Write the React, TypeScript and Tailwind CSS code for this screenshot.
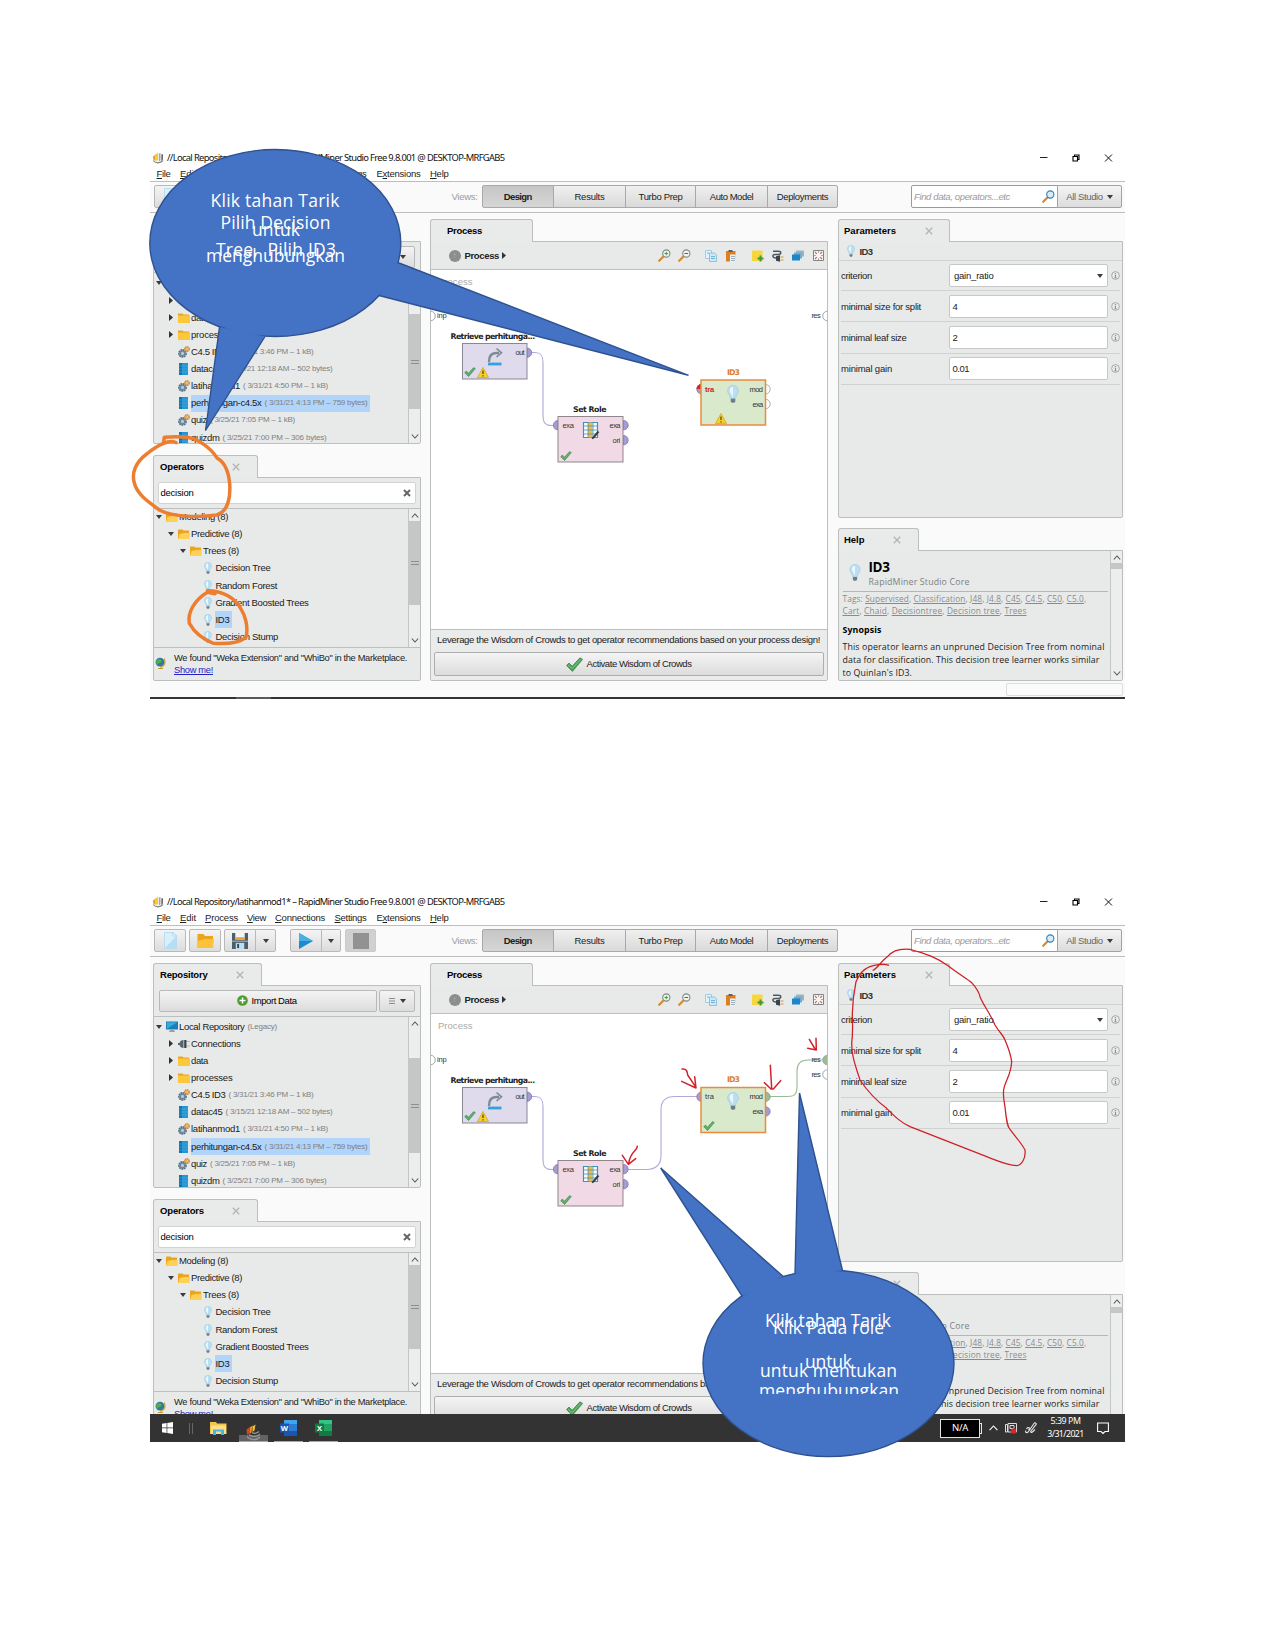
import { useLayoutEffect, useRef, useState } from "react";
import type { ReactNode } from "react";

/* Inline text whose tracking is adjusted so that it fills a given width. */
function Fit({ w, className = "", children }: { w: number; className?: string; children: ReactNode }) {
  const ref = useRef<HTMLSpanElement>(null);
  const [ls, setLs] = useState(0);
  useLayoutEffect(() => {
    const el = ref.current;
    if (!el) return;
    const n = (el.textContent || "").length || 1;
    setLs((w - el.getBoundingClientRect().width) / n);
  }, [w]);
  return (
    <span ref={ref} className={"inline-block shrink-0 whitespace-pre " + className} style={{ letterSpacing: ls }}>
      {children}
    </span>
  );
}

/* ---------- icons ---------- */

const Logo = () => (
  <svg className="h-[12px] w-[12px] shrink-0" viewBox="0 0 12 12">
    <path d="M.8 4.500 3 3v5L1.500 8.500z" fill="#e8a13a" />
    <path d="M3 2.500 6 .8v7.400L3 9z" fill="#f2cf2a" />
    <path d="M6.800 1.500 8.500 1v7.500l-1.700.8z" fill="#a4a4a4" />
    <path d="M9.300 2.500 11 2v5.500L9.300 9z" fill="#6d6d6d" />
    <path d="M1.300 8.500C3 11 8 12 11 8.500" fill="none" stroke="#8a8a8a" strokeWidth="1.300" />
  </svg>
);

const Caret = ({ className = "" }: { className?: string }) => (
  <svg className={"h-[4px] w-[6px] shrink-0 " + className} viewBox="0 0 6 4">
    <path d="M0 0h6L3 4z" fill="#3c3c3c" />
  </svg>
);
const Right = () => (
  <svg className="h-[7px] w-[4px] shrink-0" viewBox="0 0 4 7">
    <path d="M0 0v7l4-3.500z" fill="#333" />
  </svg>
);
const Close = () => (
  <svg className="h-[8px] w-[8px] shrink-0" viewBox="0 0 8 8">
    <path d="M.8.8l6.400 6.400M7.200.8.8 7.200" stroke="#b4b4b4" strokeWidth="1.300" />
  </svg>
);

const Folder = ({ open = false }: { open?: boolean }) => (
  <svg className="h-[10px] w-[12px] shrink-0" viewBox="0 0 12 10">
    <path d="M0 .5h4.500l1 1H11V10H0z" fill="#e9a51c" />
    {open ? <path d="M0 10 1.500 5 6 4l6-.2L11.500 10z" fill="#ffd057" /> : <path d="M0 2.500h12V10H0z" fill="#fbc83c" />}
  </svg>
);
const Monitor = () => (
  <svg className="h-[11px] w-[12px] shrink-0" viewBox="0 0 12 11">
    <path d="M0 .5h12v8H0z" fill="#1b7fb5" />
    <path d="M.7 1.200h10.600L1 7.800z" fill="#39a9e0" />
    <path d="M4 9.500h4l1 1H3z" fill="#555" />
  </svg>
);
const Plug = () => (
  <svg className="h-[10px] w-[12px] shrink-0" viewBox="0 0 12 10">
    <path d="M0 4h1.500C2 2 3.500 1 5.500 1v8C3.500 9 2 8 1.500 6H0z" fill="#54666f" />
    <path d="M6.200 1h2.300v8H6.200z" fill="#37454c" />
    <path d="M9 2.500h3M9 7h3" stroke="#d8b84a" strokeWidth="1.200" />
  </svg>
);
const Gears = () => (
  <svg className="h-[12px] w-[12px] shrink-0" viewBox="0 0 12 12">
    <circle cx="4.500" cy="7.400" r="3.300" fill="none" stroke="#4f6d82" strokeWidth="2.200" strokeDasharray="1.700 .5" />
    <circle cx="4.500" cy="7.400" r="2.400" fill="#b9c8d2" stroke="#6d8698" strokeWidth="1.600" />
    <circle cx="9" cy="3" r="2" fill="none" stroke="#d98a2b" strokeWidth="2" strokeDasharray="1.300 .35" />
    <circle cx="9" cy="3" r="1.400" fill="#f0d0a0" stroke="#e3a04c" />
  </svg>
);
const Table = () => (
  <svg className="h-[12px] w-[9px] shrink-0" viewBox="0 0 9 12">
    <path d="M0 0h9v12H0z" fill="#2496d3" />
    <path d="M0 0h3v12H0z" fill="#1474ab" />
    <path d="M0 3h9M0 6h9M0 9h9" stroke="#62bdea" strokeWidth=".4" />
  </svg>
);
const Bulb = ({ className = "h-[12px] w-[8px]" }: { className?: string }) => (
  <svg className={"shrink-0 " + className} viewBox="0 0 8 12">
    <path d="M4 .3A3.600 3.600 0 0 0 .4 3.900C.4 6 2.300 6.600 2.300 9h3.400c0-2.400 1.900-3 1.900-5.100A3.600 3.600 0 0 0 4 .3z" fill="#b8dff3" stroke="#98c6de" strokeWidth=".4" />
    <path d="M3 1.500C1.700 2.200 1.500 4 2.200 5.200L4 8V1z" fill="#eaf7fd" />
    <path d="M2.500 9.200h3v1.800L4.800 11.800H3.200L2.500 11z" fill="#6e7c85" />
  </svg>
);
const Check = ({ className }: { className: string }) => (
  <svg className={"shrink-0 " + className} viewBox="0 0 17 15">
    <path d="M.5 8.500 3 6l3.200 3.200L14 .8l2.600 1.600L6.400 14.400z" fill="#4da35a" stroke="#2f7f3d" strokeWidth=".7" />
    <path d="M2 8.200 6.300 11.500 15 2.200" fill="none" stroke="#7cc487" strokeWidth="1" />
  </svg>
);
const Warn = ({ className }: { className: string }) => (
  <svg className={className} viewBox="0 0 12 11">
    <path d="M6 .5 11.600 10.500H.4z" fill="#f6cf2c" stroke="#d4a514" strokeWidth=".7" strokeLinejoin="round" />
    <path d="M6 3.500v3.600M6 8.200v1.200" stroke="#4f430e" strokeWidth="1.200" />
  </svg>
);
const Search = ({ sign = "" }: { sign?: string }) => (
  <svg className="h-[13px] w-[13px] shrink-0" viewBox="0 0 13 13">
    <path d="M1.200 11.800 5.500 7.500" stroke="#d8892b" strokeWidth="2.200" strokeLinecap="round" />
    <circle cx="8.300" cy="4.500" r="3.600" fill={sign ? "#eef3ee" : "#d6ecf8"} stroke={sign ? "#7e8a86" : "#2d7fb5"} strokeWidth="1.100" />
    {sign === "+" && <path d="M6.500 4.500h3.600M8.300 2.700v3.600" stroke="#4a9c3f" />}
    {sign === "-" && <path d="M6.500 4.500h3.600" stroke="#c0392b" />}
  </svg>
);
const Info = () => (
  <svg className="h-[9px] w-[9px] shrink-0" viewBox="0 0 9 9">
    <circle cx="4.500" cy="4.500" r="3.900" fill="none" stroke="#9a9a9a" strokeWidth=".8" />
    <path d="M4.500 4v2.800M3.500 6.800h2M3.700 4h.8M4.500 2v1" stroke="#7a7a7a" strokeWidth=".8" />
  </svg>
);

/* ---------- shared chrome ---------- */

const btn = "flex items-center justify-center border border-[#b9b9b9] bg-gradient-to-b from-[#f4f4f4] to-[#dcdcdc]";

function Tab({ label, lw, className, gap, close = true }: { label: string; lw: number; className: string; gap?: string; close?: boolean }) {
  return (
    <div className={"relative z-10 -mb-px flex h-[23px] shrink-0 items-center rounded-t-[3px] border border-b-0 border-[#bdbebe] bg-[#e9eaea] pb-px " + className}>
      <Fit w={lw} className="text-[9.5px] font-bold text-black">{label}</Fit>
      {close && <span className={gap}><Close /></span>}
    </div>
  );
}

function Scrollbar({ before, thumb, grip = true }: { before: string; thumb: string; grip?: boolean }) {
  return (
    <div className="flex w-[12px] shrink-0 flex-col items-center border-l border-[#c4c5c5] bg-[#eceded]">
      <svg className="mt-[4px] h-[5px] w-[8px] shrink-0" viewBox="0 0 8 5"><path d="M.8 4.500 4 1l3.200 3.500" fill="none" stroke="#555" strokeWidth="1.100" /></svg>
      <div className={"shrink-0 " + before} />
      <div className={"flex w-full shrink-0 flex-col items-center justify-center gap-[2px] bg-[#c5c6c6] " + thumb}>
        {grip && <><i className="h-px w-[8px] bg-[#8d8e8e]" /><i className="h-px w-[8px] bg-[#8d8e8e]" /></>}
      </div>
      <div className="flex-1" />
      <svg className="mb-[4px] h-[5px] w-[8px] shrink-0" viewBox="0 0 8 5"><path d="M.8.5 4 4 7.200.5" fill="none" stroke="#555" strokeWidth="1.100" /></svg>
    </div>
  );
}

/* ---------- header ---------- */

const menus: [string, number, number, string][] = [
  ["File", 0, 14, "w-[23.5px]"],
  ["Edit", 0, 16, "w-[25px]"],
  ["Process", 0, 33, "w-[42px]"],
  ["View", 0, 19, "w-[28px]"],
  ["Connections", 0, 50, "w-[59.5px]"],
  ["Settings", 0, 32, "w-[42px]"],
  ["Extensions", 1, 44, "w-[53.5px]"],
  ["Help", 0, 18.5, "w-[20px]"],
];

const views: [string, number, string][] = [
  ["Design", 28, "w-[72.5px] bg-gradient-to-b from-[#c6c6c6] to-[#d6d6d6] font-bold rounded-l-[2px]"],
  ["Results", 30, "w-[73px] bg-gradient-to-b from-[#f0f0f0] to-[#d9d9d9]"],
  ["Turbo Prep", 44, "w-[71px] bg-gradient-to-b from-[#f0f0f0] to-[#d9d9d9]"],
  ["Auto Model", 43.5, "w-[73px] bg-gradient-to-b from-[#f0f0f0] to-[#d9d9d9]"],
  ["Deployments", 51.5, "w-[71px] bg-gradient-to-b from-[#f0f0f0] to-[#d9d9d9] rounded-r-[2px]"],
];

function Header() {
  return (
    <>
      <div className="flex h-[20px] shrink-0 items-center pl-[2px]">
        <Logo />
        <Fit w={337.5} className="ml-[3px] font-['Noto_Sans'] text-[9.4px] text-[#111]">//Local Repository/latihanmod1* – RapidMiner Studio Free 9.8.001 @ DESKTOP-MRFGAB5</Fit>
        <div className="ml-auto flex items-center pr-[12.5px]">
          <svg className="h-[10px] w-[73px]" viewBox="0 0 73 10">
            <path d="M0 4.500h7.500" stroke="#222" />
            <path d="M33 3.500h4.500V8H33zM34.500 3.500V2H39v4.500h-1.500" fill="none" stroke="#000" strokeWidth="1.100" />
            <path d="M65 1.500l7 7M72 1.500l-7 7" stroke="#111" />
          </svg>
        </div>
      </div>
      <div className="flex h-[13px] shrink-0 items-center pb-[1.5px] pl-[6.5px] text-[9.5px] text-[#222]">
        {menus.map(([t, u, w, cls]) => (
          <div key={t} className={"flex shrink-0 items-center " + cls}>
            <Fit w={w}>{t.slice(0, u)}<u className="underline-offset-1">{t[u]}</u>{t.slice(u + 1)}</Fit>
          </div>
        ))}
      </div>
      <div className="flex h-[32px] shrink-0 items-center border-y border-[#bebebe] bg-[#fafafa] pb-px pl-[4px] pr-[3px]">
        <div className={btn + " h-[23px] w-[32px] rounded-[2px]"}>
          <svg className="h-[17px] w-[13px]" viewBox="0 0 13 17"><path d="M.5.5H9L12.500 4v12.500H.5z" fill="#d8f0fc" stroke="#a9d4ec" strokeWidth=".7" /><path d="M.5 16.500 12.500 4v12.500z" fill="#b4def5" /><path d="M9 .5V4h3.500z" fill="#fff" stroke="#8fc3e0" strokeWidth=".6" /></svg>
        </div>
        <div className={btn + " ml-[3px] h-[23px] w-[32px] rounded-[2px]"}>
          <svg className="h-[14px] w-[17px]" viewBox="0 0 17 14"><path d="M.5 0h6l1.500 2h8v12H.5z" fill="#eda41b" /><path d="M0 14 .5 7 8 5h9l-1 9z" fill="#fcc33a" /></svg>
        </div>
        <div className={btn + " ml-[3px] h-[23px] w-[32px] rounded-l-[2px]"}>
          <svg className="h-[16px] w-[16px]" viewBox="0 0 17 17"><path d="M0 0h17v17H0z" fill="#4d5f69" /><path d="M3.500 0h10v7h-10z" fill="#f1f5f7" /><path d="M3.500 4.500h10V7h-10z" fill="#f09c33" /><path d="M0 8h17v1.500H0z" fill="#93a3ab" /><path d="M4 10.500h9V17H4z" fill="#b9dff2" /><path d="M5.500 11.500h2V16h-2z" fill="#37474f" /></svg>
        </div>
        <div className={btn + " -ml-px h-[23px] w-[21px] rounded-r-[2px]"}><Caret /></div>
        <div className={btn + " ml-[14px] h-[23px] w-[32px] rounded-l-[2px]"}>
          <svg className="h-[16px] w-[14px]" viewBox="0 0 14 16"><path d="M0 0l14 8L0 16z" fill="#1c8bc9" /><path d="M0 0l14 8H0z" fill="#46b0e6" /></svg>
        </div>
        <div className={btn + " -ml-px h-[23px] w-[20px] rounded-r-[2px]"}><Caret /></div>
        <div className="ml-[4px] flex h-[23px] w-[31px] items-center justify-center rounded-[2px] border border-[#cacaca] bg-[#d0d0d0]"><div className="h-[16px] w-[16px] bg-[#929292]" /></div>

        <Fit w={26} className="ml-[75.5px] text-[9.5px] text-[#9b9b9b]">Views:</Fit>
        <div className="ml-[4px] flex">
          {views.map(([t, w, cls]) => (
            <div key={t} className={"-mr-px flex h-[23px] items-center justify-center border border-[#a9a9a9] text-[9.5px] text-[#1c1c1c] " + cls}>
              <Fit w={w}>{t}</Fit>
            </div>
          ))}
        </div>
        <div className="ml-auto flex h-[23px]">
          <div className="flex w-[147px] items-center justify-between rounded-l-[2px] border border-[#9a9a9a] bg-white pl-[2px] pr-[2px]">
            <Fit w={96} className="text-[9.5px] italic text-[#9a9a9a]">Find data, operators...etc</Fit>
            <Search />
          </div>
          <div className={btn + " -ml-px w-[65px] gap-[4px] rounded-r-[2px] !border-[#a2a2a2]"}>
            <Fit w={36.5} className="text-[9.5px] text-[#666]">All Studio</Fit><Caret />
          </div>
        </div>
      </div>
    </>
  );
}

/* ---------- left column ---------- */

type Row = { pad: string; arrow?: "d" | "r"; icon: ReactNode; text: string; w: number; meta?: string; mw?: number; sel?: boolean };

const repo: Row[] = [
  { pad: "pl-0", arrow: "d", icon: <Monitor />, text: "Local Repository", w: 65.5, meta: "(Legacy)", mw: 29.5 },
  { pad: "pl-[12px]", arrow: "r", icon: <Plug />, text: "Connections", w: 49.5 },
  { pad: "pl-[12px]", arrow: "r", icon: <Folder />, text: "data", w: 17 },
  { pad: "pl-[12px]", arrow: "r", icon: <Folder />, text: "processes", w: 41.5 },
  { pad: "pl-[12px]", icon: <Gears />, text: "C4.5 ID3", w: 34.5, meta: "( 3/31/21 3:46 PM – 1 kB)", mw: 85 },
  { pad: "pl-[12px]", icon: <Table />, text: "datac45", w: 31.5, meta: "( 3/15/21 12:18 AM – 502 bytes)", mw: 107 },
  { pad: "pl-[12px]", icon: <Gears />, text: "latihanmod1", w: 49, meta: "( 3/31/21 4:50 PM – 1 kB)", mw: 85 },
  { pad: "pl-[12px]", icon: <Table />, text: "perhitungan-c4.5x", w: 70.5, meta: "( 3/31/21 4:13 PM – 759 bytes)", mw: 103, sel: true },
  { pad: "pl-[12px]", icon: <Gears />, text: "quiz", w: 16, meta: "( 3/25/21 7:05 PM – 1 kB)", mw: 85 },
  { pad: "pl-[12px]", icon: <Table />, text: "quizdm", w: 28.5, meta: "( 3/25/21 7:00 PM – 306 bytes)", mw: 104 },
];

const ops: Row[] = [
  { pad: "pl-0", arrow: "d", icon: <Folder open />, text: "Modeling (8)", w: 49 },
  { pad: "pl-[12px]", arrow: "d", icon: <Folder open />, text: "Predictive (8)", w: 51 },
  { pad: "pl-[24px]", arrow: "d", icon: <Folder open />, text: "Trees (8)", w: 36 },
  { pad: "pl-[36.5px]", icon: <Bulb />, text: "Decision Tree", w: 55 },
  { pad: "pl-[36.5px]", icon: <Bulb />, text: "Random Forest", w: 61.5 },
  { pad: "pl-[36.5px]", icon: <Bulb />, text: "Gradient Boosted Trees", w: 93 },
  { pad: "pl-[36.5px]", icon: <Bulb />, text: "ID3", w: 14, sel: true },
  { pad: "pl-[36.5px]", icon: <Bulb />, text: "Decision Stump", w: 62.5 },
];

function Tree({ rows, className = "" }: { rows: Row[]; className?: string }) {
  return (
    <div className={"min-w-0 flex-1 overflow-hidden text-[9.5px] text-[#1a1a1a] " + className}>
      {rows.map((r) => (
        <div key={r.text} className={"flex h-[17.15px] items-center " + r.pad}>
          <div className="-ml-[.5px] flex w-[11px] shrink-0 justify-center">{r.arrow === "d" ? <Caret /> : r.arrow === "r" ? <Right /> : null}</div>
          <div className="flex w-[14px] shrink-0 justify-center">{r.icon}</div>
          <div className={"flex h-full items-center gap-[3px] px-[.5px] pr-[2px] " + (r.sel ? "bg-[#b1d4fb]" : "")}>
            <Fit w={r.w}>{r.text}</Fit>
            {r.meta && <Fit w={r.mw || 0} className="text-[8px] text-[#808080]">{r.meta}</Fit>}
          </div>
        </div>
      ))}
    </div>
  );
}

const panel = "border border-[#bdbebe] bg-[#e8eaea] rounded-b-[2px] flex flex-col overflow-hidden";

function LeftColumn({ repoTop, opsTop }: { repoTop: string; opsTop: string }) {
  return (
    <div className="flex w-[268px] shrink-0 flex-col">
      <Tab label="Repository" lw={47.5} className="w-[109px] pl-[6px]" gap="ml-[28px]" />
      <div className={panel + " h-[203px] shrink-0"}>
        <div className="flex h-[31px] shrink-0 items-center justify-between border-b border-[#bdbebe] px-[5px] pb-[1px]">
          <div className={btn + " h-[22px] w-[218px] gap-[4px] rounded-[2px]"}>
            <svg className="h-[11px] w-[11px]" viewBox="0 0 11 11"><circle cx="5.500" cy="5.500" r="5.300" fill="#4a9e2c" /><path d="M5.500 2.500v6M2.500 5.500h6" stroke="#fff" strokeWidth="1.500" /></svg>
            <Fit w={45} className="mr-[3px] text-[9.5px]">Import Data</Fit>
          </div>
          <div className={btn + " h-[22px] w-[36px] gap-[5px] rounded-[2px]"}>
            <svg className="h-[6px] w-[6px]" viewBox="0 0 6 6"><path d="M0 .5h6M0 3h6M0 5.500h6" stroke="#777" strokeWidth=".8" /></svg>
            <Caret />
          </div>
        </div>
        <div className="flex min-h-0 flex-1">
          <Tree rows={repo} className={repoTop} />
          <Scrollbar before="h-[32px]" thumb="h-[95px]" />
        </div>
      </div>
      <Tab label="Operators" lw={44} className="mt-[11px] w-[105px] pl-[6px]" gap="ml-[28px]" />
      <div className={panel + " h-[204px] shrink-0"}>
        <div className="flex h-[31px] shrink-0 items-center border-b border-[#bdbebe] pl-[4px] pr-[4px]">
          <div className="flex h-[22px] w-full items-center justify-between rounded-[2px] border border-[#d2d3d3] bg-white pl-[1.5px] pr-[4px]">
            <Fit w={33} className="text-[9.5px]">decision</Fit>
            <svg className="h-[8px] w-[8px]" viewBox="0 0 8 8"><path d="M1 1l6 6M7 1 1 7" stroke="#666" strokeWidth="2" /></svg>
          </div>
        </div>
        <div className="flex h-[139px] shrink-0 border-b border-[#bdbebe]">
          <Tree rows={ops} className={opsTop} />
          <Scrollbar before="h-[3px]" thumb="h-[84px]" />
        </div>
        <div className="flex flex-1 items-start pl-[1px] pt-[3.500px]">
          <svg className="mt-[5px] h-[12px] w-[11px]" viewBox="0 0 11 12"><circle cx="5" cy="5.200" r="4.400" fill="#2a7c9b" /><path d="M3 2.500c2-1.500 4 0 3.500 2S3 5.500 2.500 8C.5 6 1 3.500 3 2.500z" fill="#5aab4b" /><path d="M9 1.500c2 3 1 8-4 8.700M3 11.500h5" fill="none" stroke="#c59a35" strokeWidth="1.100" /></svg>
          <div className="ml-[8px] flex flex-col text-[9.300px] leading-[12px] text-[#222]">
            <Fit w={233}>We found &quot;Weka Extension&quot; and &quot;WhiBo&quot; in the Marketplace.</Fit>
            <Fit w={39} className="self-start text-[#2222c8] underline">Show me!</Fit>
          </div>
        </div>
      </div>
    </div>
  );
}

/* ---------- process canvas ---------- */

function Label({ className, w, size = "text-[7.5px]", color = "text-[#333]", children }: { className: string; w: number; size?: string; color?: string; children: ReactNode }) {
  return <Fit w={w} className={"!absolute leading-[10px] " + className + " " + size + " " + color}>{children}</Fit>;
}

function Canvas({ connected }: { connected: boolean }) {
  const line = "#b3a6d8";
  const port = "#a79bd0";
  const idY = connected ? 0 : 36.5;
  return (
    <div className="relative h-[359px] shrink-0 overflow-hidden bg-white">
      <svg className="absolute inset-0 h-[359px] w-[396px]" viewBox="0 0 396 359">
        <g fill="#fff" stroke="#a5a5a5">
          <circle cx="-.5" cy="46" r="4.800" />
          <circle cx="396.500" cy="46" r="4.800" fill={connected ? "#9dbb93" : "#fff"} />
          {connected && <circle cx="396.500" cy="60.500" r="4.800" />}
        </g>
        <g fill="none" stroke={line} strokeWidth="1.100">
          <path d="M100 82.500h4c6 0 8 3 8 10v53c0 7 2 10 9 10h6" />
          {connected && <path d="M197 155.500h18c11 0 15-5 15-14v-46c0-9 5-13 14-13h22" />}
          {connected && <path d="M338 82.500h19c8 0 9-4 9-10V57c0-8 4-11 11-11h14" stroke="#9cba93" />}
        </g>
        <g fill={port} stroke="#8275b3" strokeWidth=".8">
          <path d="M96 78a4.700 4.700 0 0 1 0 9.400z" />
          <path d="M127 150.500a4.700 4.700 0 0 0 0 9.400z" />
          <path d="M192.500 150.500a4.700 4.700 0 0 1 0 9.400z" />
          <path d="M192.500 165.500a4.700 4.700 0 0 1 0 9.400z" />
        </g>
        <rect x="31.500" y="73.500" width="64.500" height="35.500" fill="#dfdaec" stroke="#8a8792" />
        <rect x="127" y="146.500" width="65" height="45.500" fill="#f1dae6" stroke="#8f858b" />
        <g transform={"translate(0 " + idY + ")"}>
          <path d="M270.500 78a4.700 4.700 0 0 0 0 9.400z" fill={port} stroke="#8275b3" strokeWidth=".8" />
          {!connected && <path d="M270.500 77.600a5 5 0 0 0-5 5h5z" fill="#d22" />}
          <path d="M334.500 78a4.700 4.700 0 0 1 0 9.400z" fill={connected ? "#9dbb93" : "#fff"} stroke={connected ? "#7d9d73" : "#999"} strokeWidth=".8" />
          <path d="M334.500 92.800a4.700 4.700 0 0 1 0 9.400z" fill={connected ? port : "#fff"} stroke={connected ? "#8275b3" : "#999"} strokeWidth=".8" />
          <rect x="270" y="73.500" width="64.500" height="45" fill="#d9e9cc" stroke="#ec8a3c" strokeWidth="1.500" />
        </g>
        <path d="M58 92c0-6 2-9 7-9h3" fill="none" stroke="#7b8b96" strokeWidth="2.400" />
        <path d="M65.500 78.500 70.500 82.800 65.500 87" fill="none" stroke="#7b8b96" strokeWidth="1.600" />
        <path d="M57 94h13.500" stroke="#34a0dc" strokeWidth="2.800" />
        <path d="M152.500 152.500h14v15h-14z" fill="#fff" stroke="#3b93bf" strokeWidth="1.200" />
        <path d="M157 152.500h4.500v15H157z" fill="#f5b942" />
        <path d="M152.500 156h14M152.500 160h14M152.500 164h14M157 152.500v15M162 152.500v15" stroke="#3b93bf" strokeWidth=".8" />
        <path d="M167.500 161.500l-5 6-1.500 1" stroke="#33414a" strokeWidth="2" />
      </svg>
      <Label className="left-[7px] top-[7px]" w={34.500} size="text-[9.500px]" color="text-[#aaa]">Process</Label>
      <Label className="left-[6px] top-[41px]" w={9.500}>inp</Label>
      <Label className="left-[380.500px] top-[41px]" w={8.500}>res</Label>
      {connected && <Label className="left-[380.500px] top-[56px]" w={8.500}>res</Label>}
      <Label className="left-[19.500px] top-[61.500px] font-['DejaVu_Sans'] font-bold" w={84} size="text-[7.800px]" color="text-[#222]">Retrieve perhitunga...</Label>
      <Label className="left-[84.500px] top-[77.500px]" w={8.500}>out</Label>
      <Label className="left-[142px] top-[134.500px] font-['DejaVu_Sans'] font-bold" w={33} size="text-[7.800px]" color="text-[#222]">Set Role</Label>
      <Label className="left-[131.500px] top-[150.500px]" w={11}>exa</Label>
      <Label className="left-[178.500px] top-[150.500px]" w={10.500}>exa</Label>
      <Label className="left-[181.500px] top-[165.500px]" w={7.500}>ori</Label>
      <Check className="absolute left-[33px] top-[97px] h-[10px] w-[12px]" />
      <Warn className="absolute left-[45.500px] top-[97px] h-[11px] w-[12px]" />
      <Check className="absolute left-[129px] top-[180.500px] h-[10px] w-[12px]" />
      <div className={"absolute left-[270px] h-[65px] w-[66px] " + (connected ? "top-[58px]" : "top-[95px]")}>
        <Label className="left-[26px] top-[3px] font-['DejaVu_Sans'] font-bold" w={12} size="text-[7.800px]" color="text-[#dc8030]">ID3</Label>
        <Label className={"left-[4px] top-[19.500px] " + (connected ? "" : "font-bold")} w={9} color={connected ? "text-[#333]" : "text-[#c22]"}>tra</Label>
        <Label className="left-[48.500px] top-[19.500px]" w={13}>mod</Label>
        <Label className="left-[51.500px] top-[34.500px]" w={10}>exa</Label>
        <Bulb className="absolute left-[26px] top-[20px] h-[18px] w-[12px]" />
        {connected
          ? <Check className="absolute left-[2px] top-[49px] h-[10px] w-[12px]" />
          : <Warn className="absolute left-[13.500px] top-[48px] h-[11px] w-[12px]" />}
      </div>
    </div>
  );
}

function CenterColumn({ connected }: { connected: boolean }) {
  return (
    <div className="flex w-[398px] shrink-0 flex-col">
      <Tab label="Process" lw={35} className="w-[103px] pl-[16px]" close={false} />
      <div className={panel + " h-[440px] shrink-0"}>
        <div className="flex h-[28px] shrink-0 items-center border-b border-[#bdbebe] pl-[17.500px] pr-[3.500px]">
          <div className="flex h-[12px] w-[12px] items-center justify-center rounded-full bg-[#8d8d8d] text-[8px] leading-none text-[#b5b5b5]">↑</div>
          <Fit w={34.500} className="ml-[4px] mr-[3px] text-[9.500px] font-bold text-[#222]">Process</Fit>
          <Right />
          <div className="ml-auto flex items-center">
            <span className="mr-[7px]"><Search sign="+" /></span>
            <span className="mr-[14px]"><Search sign="-" /></span>
            <svg className="mr-[9px] h-[12px] w-[12px]" viewBox="0 0 12 12"><path d="M.5.5h6v8h-6z" fill="#e2f2fb" stroke="#92c4e0" strokeWidth=".8" /><path d="M4.500 3h5l2 2v6.500h-7z" fill="#cfe8f6" stroke="#7fb8d8" strokeWidth=".8" /><path d="M6 6.500h4M6 8.500h4M2 3h2" stroke="#5da3ca" strokeWidth=".8" /></svg>
            <svg className="mr-[16px] h-[12px] w-[10px]" viewBox="0 0 10 12"><path d="M0 1h9.500v10.500H0z" fill="#de7f22" /><path d="M2.500 0h4v2h-4z" fill="#59646b" /><path d="M4 4.500h5.500L10 12H4z" fill="#e6f1f8" /><path d="M5 6.500h4M5 8.500h4M5 10.500h4" stroke="#7b95a5" strokeWidth=".7" /></svg>
            <svg className="mr-[8px] h-[12px] w-[12px]" viewBox="0 0 12 12"><path d="M0 .5h10.500V11H0z" fill="#f7d63f" /><path d="M8.500 5.500v6M5.500 8.500h6" stroke="#3e9a37" strokeWidth="2" /></svg>
            <svg className="mr-[8px] h-[12px] w-[12px]" viewBox="0 0 12 12"><path d="M1 1.200h5.500c3 0 3 3.300 0 3.300H3c-3 0-3 3.500 1 3.500" fill="none" stroke="#4b5a63" strokeWidth="1.500" /><path d="M4 6.200l4-1v6.500l-4-1z" fill="#37444c" /><path d="M8.500 7h3M8.500 10h3" stroke="#e0912d" strokeWidth="1.200" /></svg>
            <svg className="mr-[9px] h-[11px] w-[12px]" viewBox="0 0 12 11"><path d="M4 .5h8v6H4z" fill="#9fb4c0" /><path d="M2 2.500h8v6H2z" fill="#6caed3" /><path d="M0 4.500h8v6H0z" fill="#1d86c8" /></svg>
            <svg className="h-[11px] w-[11px]" viewBox="0 0 11 11"><path d="M.5.5h10v10H.5z" fill="#f8f4f2" stroke="#777" strokeWidth=".9" /><path d="M2 2l1.800 1.800M9 2 7.200 3.800M2 9l1.800-1.800M9 9 7.200 7.200" stroke="#c86458" strokeWidth="1.100" /><path d="M5.500 1v2M5.500 8v2M1 5.500h2M8 5.500h2" stroke="#999" strokeWidth=".8" /></svg>
          </div>
        </div>
        <Canvas connected={connected} />
        <div className="flex flex-1 flex-col border-t border-[#bdbebe] bg-[#eaebeb]">
          <div className="flex h-[22px] items-center pl-[6px] pb-[1.500px] text-[9.500px] text-[#222]">
            <Fit w={383}>Leverage the Wisdom of Crowds to get operator recommendations based on your process design!</Fit>
          </div>
          <div className={btn + " ml-[3px] h-[24px] w-[390px] gap-[4px] rounded-[2px] !border-[#aeaeae] pr-[1px]"}>
            <Check className="h-[15px] w-[17px]" />
            <Fit w={105} className="text-[9.500px] text-[#222]">Activate Wisdom of Crowds</Fit>
          </div>
        </div>
      </div>
    </div>
  );
}

/* ---------- right column ---------- */

const params: [string, number, string, number, string][] = [
  ["criterion", 31, "gain_ratio", 39.5, "pl-[4px]"],
  ["minimal size for split", 80, "4", 5, "pl-[2.5px]"],
  ["minimal leaf size", 65.5, "2", 5, "pl-[2.5px]"],
  ["minimal gain", 51, "0.01", 16.5, "pl-[2.5px]"],
];

const tags1 = ["Supervised", "Classification", "J48", "J4.8", "C45", "C4.5", "C50", "C5.0"];
const tags2 = ["Cart", "Chaid", "Decisiontree", "Decision tree", "Trees"];

function RightColumn() {
  return (
    <div className="flex w-[285px] shrink-0 flex-col">
      <Tab label="Parameters" lw={52} className="w-[112px] pl-[5px]" gap="ml-[28.500px]" />
      <div className={panel + " h-[277px] shrink-0"}>
        <div className="flex h-[19px] shrink-0 items-center border-b border-[#cfd0d0] pl-[8px] text-[9.500px]">
          <Bulb />
          <Fit w={13} className="ml-[4.500px] mt-px font-bold text-[#333]">ID3</Fit>
        </div>
        <div className="flex flex-col pl-[2px] pr-[2px]">
          {params.map(([l, lw, v, vw, pl], i) => (
            <div key={l} className="flex h-[31.400px] items-center border-b border-[#d0d2d2] text-[9.500px] text-[#1c1c1c] first:h-[30px]">
              <div className="w-[108px] shrink-0 pt-px"><Fit w={lw}>{l}</Fit></div>
              <div className={"flex h-[23px] w-[159px] shrink-0 items-center justify-between rounded-[2px] border border-[#c6c7c7] bg-white pr-[4px] pt-px " + pl}>
                <Fit w={vw}>{v}</Fit>
                {i === 0 && <Caret />}
              </div>
              <span className="ml-[3px]"><Info /></span>
            </div>
          ))}
        </div>
      </div>
      <Tab label="Help" lw={20.500} className="mt-[10px] w-[81px] pl-[5px]" gap="ml-[28.500px]" />
      <div className={panel + " h-[131px] shrink-0 !flex-row"}>
        <div className="min-w-0 flex-1 pl-[3.500px] font-['Open_Sans'] text-[8.800px] leading-[12px] text-[#222]">
          <div className="flex h-[41px] w-[265px] items-start border-b border-[#b5b6b6]">
            <Bulb className="ml-[6px] mt-[13px] h-[17px] w-[12px]" />
            <div className="ml-[8px] flex flex-col items-start pt-[7.500px]">
              <Fit w={21} className="text-[13.500px] font-bold leading-[17px] text-black">ID3</Fit>
              <Fit w={101} className="text-[#808080] leading-[12px]">RapidMiner Studio Core</Fit>
            </div>
          </div>
          <div className="flex flex-col items-start pt-[.5px] text-[8.300px] text-[#8a8a8a]">
            <Fit w={246}>Tags: {tags1.map((t) => <span key={t}><u>{t}</u>, </span>)}</Fit>
            <Fit w={184}>{tags2.map((t, i) => <span key={t}><u>{t}</u>{i < 4 ? ", " : ""}</span>)}</Fit>
          </div>
          <Fit w={39} className="mt-[7.500px] font-bold text-black">Synopsis</Fit>
          <div className="mt-[5px] flex flex-col items-start leading-[12.800px]">
            <Fit w={262}>This operator learns an unpruned Decision Tree from nominal</Fit>
            <Fit w={257}>data for classification. This decision tree learner works similar</Fit>
            <Fit w={69.500}>to Quinlan&apos;s ID3.</Fit>
          </div>
        </div>
        <Scrollbar before="h-[3px]" thumb="h-[6px]" grip={false} />
      </div>
      <div className="ml-auto mt-[2px] h-[13px] w-[117px] shrink-0 rounded-[2px] border border-[#dcdcdc] bg-[#fbfbfb]" />
    </div>
  );
}

function Studio({ connected, height }: { connected: boolean; height: string }) {
  return (
    <div className={"flex w-[975px] flex-col overflow-hidden bg-white font-['Liberation_Sans'] leading-[12px] " + height}>
      <Header />
      <div className="flex h-[484px] shrink-0 bg-[#fafafa] pl-[3px] pt-[6px]">
        <LeftColumn repoTop={connected ? "pt-[1px]" : "pt-[1.700px]"} opsTop="-mt-[.6px]" />
        <div className="w-[9px] shrink-0" />
        <CenterColumn connected={connected} />
        <div className="w-[10px] shrink-0" />
        <RightColumn />
      </div>
    </div>
  );
}

/* ---------- taskbar ---------- */

function Office({ letter, dark, mid, light }: { letter: string; dark: string; mid: string; light: string }) {
  return (
    <svg className="h-[16px] w-[17px]" viewBox="0 0 17 16">
      <path d="M4 0h13v16H4z" fill={mid} />
      <path d="M4 0h13v4H4z" fill={light} />
      <path d="M4 11h13v5H4z" fill={dark} />
      <path d="M0 3.500h9v9H0z" fill={dark} />
      <text x="4.500" y="10.800" fontSize="7.500" fontWeight="700" fill="#fff" textAnchor="middle" fontFamily="Open Sans">{letter}</text>
    </svg>
  );
}

function Taskbar() {
  return (
    <div className="flex h-[28px] w-[975px] items-center bg-[#333] font-['Noto_Sans'] text-white">
      <svg className="ml-[12px] h-[12px] w-[11px]" viewBox="0 0 11 12"><path d="M0 1.700 4.600 1v4.600H0zM5.300.9 11 0v5.600H5.300zM0 6.300h4.600V11L0 10.300zM5.300 6.300H11V12l-5.700-.9z" fill="#fff" /></svg>
      <div className="ml-[16px] flex gap-[2px]"><i className="h-[11px] w-px bg-[#666]" /><i className="h-[11px] w-px bg-[#666]" /></div>
      <svg className="ml-[17px] h-[13px] w-[17px]" viewBox="0 0 17 13"><path d="M0 0h6l1 1.500h9.500V12H0z" fill="#f3c54b" /><path d="M1 3.500h15V12H1z" fill="#fbe08c" /><path d="M3 13V7.500h11V13h-3V9.500H6V13z" fill="#4cb3dc" /></svg>
      <div className="ml-[12px] flex h-[28px] w-[29px] flex-col items-center justify-end">
        <svg className="relative z-10 -mb-[6px] h-[17px] w-[17px]" viewBox="0 0 17 17"><path d="M1.500 5.500 4 4v5.500L2 11z" fill="#d9472c" /><path d="M4.500 3.500 7.500 1.500 6.500 8.500 4.500 10z" fill="#ef8b22" /><path d="M7.500 2.500 10.500.5 9.500 6.500 7.500 8z" fill="#f6c12c" /><path d="M2 12.500c3 4 10 4 13 .5M4 10.500c3 3 8 2.500 11-.5M7 8.500c2 1.500 4.500 1 7-1" fill="none" stroke="#9a9a9a" strokeWidth="1.200" /></svg>
        <div className="h-[6px] w-full bg-[#777]/70" />
        <div className="h-[1.500px] w-full bg-[#7fb2dc]" />
      </div>
      <div className="ml-[6px] flex h-[28px] w-[29px] flex-col items-center justify-end"><span className="mb-[5px]"><Office letter="W" dark="#1a56b0" mid="#2b7cd3" light="#41a5ee" /></span><div className="h-[1.500px] w-full bg-[#76b4e6]" /></div>
      <div className="ml-[6px] flex h-[28px] w-[29px] flex-col items-center justify-end"><span className="mb-[5px]"><Office letter="X" dark="#107c41" mid="#21a366" light="#33c481" /></span><div className="h-[1.500px] w-full bg-[#76b4e6]" /></div>

      <div className="ml-auto flex h-[19px] w-[40px] items-center justify-center border border-[#e5e5e5] bg-black text-[9.500px] leading-none"><Fit w={16}>N/A</Fit></div>
      <i className="h-[11px] w-[2px] border border-l-0 border-[#e5e5e5]" />
      <svg className="ml-[7px] h-[6px] w-[9px]" viewBox="0 0 9 6"><path d="M.6 5.200 4.500 1l3.900 4.200" fill="none" stroke="#fff" strokeWidth="1.100" /></svg>
      <svg className="ml-[7px] h-[12px] w-[12px]" viewBox="0 0 12 12"><path d="M.5 2.500h2v7.500h-2zM3 1.500h8.500v8.500H3z" fill="none" stroke="#ddd" /><path d="M5 3.500h4v3H5z" fill="none" stroke="#ddd" /><circle cx="8.500" cy="9" r="2.800" fill="#d9262b" /></svg>
      <svg className="ml-[8px] h-[12px] w-[12px]" viewBox="0 0 12 12"><path d="M1 8.500c-1.500 2 1.500 3 2.500 1L9 1.500c1-1.500 3 0 2 1.200L6 9c-1 1.500.500 2 2 .5l2-2M1.500 7c2-3 4-1 2 1" fill="none" stroke="#e6e6e6" strokeWidth="1.100" /></svg>
      <div className="ml-[10px] flex w-[37px] flex-col items-center text-[8.800px] leading-[12.800px]"><Fit w={30}>5:39 PM</Fit><Fit w={36.500}>3/31/2021</Fit></div>
      <svg className="ml-[13px] mr-[16px] h-[13px] w-[12px]" viewBox="0 0 12 13"><path d="M.6 1h10.800v8.500H8L6 11.500 4 9.500H.6z" fill="none" stroke="#fff" strokeWidth="1.100" /></svg>
    </div>
  );
}

/* ---------- callouts and pen marks drawn over both windows ---------- */

function Markup() {
  const t = { fill: "#fff", fontFamily: "Open Sans, sans-serif", fontSize: 17.5, lengthAdjust: "spacingAndGlyphs" as const };
  return (
    <svg className="pointer-events-none absolute left-0 top-0 z-20 h-[1650px] w-[1275px]" viewBox="0 0 1275 1650">
      <defs><clipPath id="cut"><rect x="740" y="1375" width="180" height="19" /></clipPath></defs>
      <g fill="#4472c4" stroke="#2f528f" strokeWidth="1.400" strokeLinejoin="miter">
        <ellipse cx="275.300" cy="243" rx="125.500" ry="93.500" />
        <path d="M219.500 327 205.500 430.500 265 336.500" />
        <path d="M379 295.500 688.500 375.300 397.700 262.500" />
        <ellipse cx="828.500" cy="1363.300" rx="125.500" ry="93.300" />
        <path d="M742 1296 660.700 1168 783 1276.300" />
        <path d="M795 1274 799.500 1093 842.500 1270.500" />
      </g>
      <g {...t}>
        <text x="210.500" y="207.300" textLength="129">Klik tahan Tarik</text>
        <text x="220.500" y="229.300" textLength="110">Pilih Decision</text>
        <text x="252" y="235.500" textLength="48">untuk</text>
        <text x="216" y="256" textLength="120" xmlSpace="preserve">Tree,  Pilih ID3</text>
        <text x="206" y="262.300" textLength="139">menghubungkan</text>
        <text x="765" y="1326.700" textLength="126">Klik tahan Tarik</text>
        <text x="773" y="1333.700" textLength="111">Klik Pada role</text>
        <text x="805" y="1368" textLength="47">untuk</text>
        <text x="760" y="1376.700" textLength="137">untuk mentukan</text>
        <text x="759" y="1397" textLength="140" clipPath="url(#cut)">menghubungkan</text>
      </g>
      <g fill="none" stroke="#ed7d31" strokeWidth="10.500" strokeLinecap="round" strokeLinejoin="round" transform="translate(120 430) scale(.33333)">
        <path d="M168 38C150 25 110 48 80 72 45 98 36 130 42 155 50 195 90 218 118 240 160 262 240 262 290 255 325 245 332 200 329 160 325 120 310 95 292 85 270 50 230 25 200 22 170 18 150 20 133 22L131 35" />
        <path d="M285 491 262 487C225 510 202 545 208 580 222 605 250 628 280 640 310 642 355 640 378 622 386 590 375 555 362 535 345 505 310 482 262 482" />
      </g>
      <path transform="translate(820 880) scale(.33333)" fill="none" stroke="#cf1f26" strokeWidth="3.800" strokeLinejoin="round" d="M158 271C170 268 178 250 200 232 215 215 230 205 270 208 320 222 345 230 385 258 420 285 440 295 455 308 470 325 478 340 480 350 490 375 510 400 525 435 540 460 550 465 555 480 568 510 573 530 575 545 573 580 563 590 553 620 545 645 555 670 556 690 560 725 562 740 570 748 590 775 605 790 615 810 618 835 605 855 590 857 560 855 540 845 500 830L270 740C240 725 230 715 200 685 160 655 140 630 120 600 100 540 95 520 95 490 100 450 97 440 97 400 98 360 105 320 108 305 120 280 130 265 160 257 180 252 195 252 207 256" />
      <g transform="translate(420 880) scale(.33333)" fill="none" stroke="#d3222a" strokeWidth="4.500" strokeLinejoin="round" strokeLinecap="round">
        <path d="M786 567C800 565 802 575 803 585L828 622M785 604 828 624 824 590" />
        <path d="M1051 556 1055 625M1033 608 1053 627H1060L1082 602" />
        <path d="M1168 478 1187 510M1188 475 1189 510 1163 505" />
        <path d="M652 799C650 815 632 812 626 850M607 826 625 853 647 836" />
      </g>
    </svg>
  );
}

export default function App() {
  return (
    <div className="relative flex h-[1650px] w-[1275px] flex-col overflow-hidden bg-white pl-[150px] pt-[148px]">
      <Studio connected={false} height="h-[549px]" />
      <div className="flex h-[2px] w-[975px] shrink-0 bg-[#333]"><div className="ml-[86px] w-[35px] bg-[#5a5a5a]" /></div>
      <div className="mt-[193px]">
        <Studio connected height="h-[522px]" />
        <Taskbar />
      </div>
      <Markup />
    </div>
  );
}
